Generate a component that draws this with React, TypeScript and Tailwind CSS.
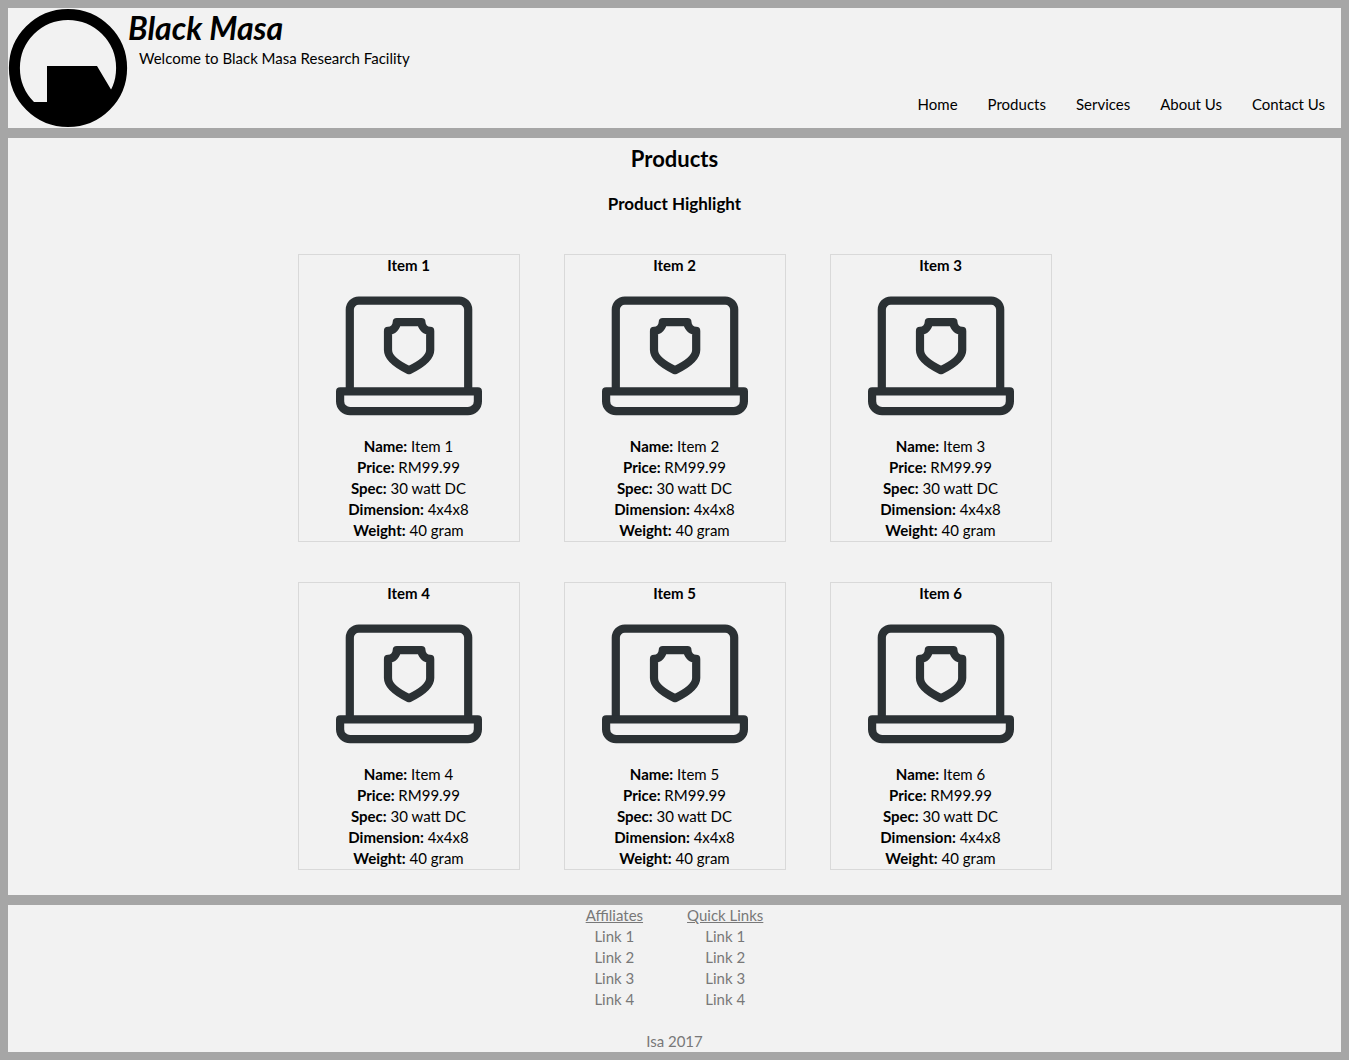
const navLinks = ["Home", "Products", "Services", "About Us", "Contact Us"];
const items = ["Item 1", "Item 2", "Item 3", "Item 4", "Item 5", "Item 6"];
const specs = [
  ["Price:", "RM99.99"],
  ["Spec:", "30 watt DC"],
  ["Dimension:", "4x4x8"],
  ["Weight:", "40 gram"],
];
const footerColumns = ["Affiliates", "Quick Links"];
const footerLinks = ["Link 1", "Link 2", "Link 3", "Link 4"];

function Logo() {
  return (
    <svg viewBox="0 0 120 120" className="size-[120px] shrink-0" role="img" aria-label="Black Masa logo">
      <circle cx="60" cy="60" r="53.6" fill="none" stroke="#000" strokeWidth="11" />
      <path d="M39 58H89L103 81.5L108 84A54 54 0 0 1 20 94H39Z" fill="#000" />
    </svg>
  );
}

function LaptopIcon() {
  return (
    <svg
      viewBox="0 0 146 120"
      className="h-[120px] w-[146px]"
      fill="none"
      stroke="#2b3134"
      strokeWidth="8.2"
      strokeLinejoin="round"
      aria-hidden="true"
    >
      <path d="M13.8 95V13.6A9 9 0 0 1 22.8 4.6H123.2A9 9 0 0 1 132.2 13.6V95" />
      <path d="M4.1 95.4H141.9V105.2A10 10 0 0 1 131.9 115.2H14.1A10 10 0 0 1 4.1 105.2Z" />
      <path d="M60.8 26.1H85.4A8.8 8.8 0 0 0 94.2 34.9V54C94.2 61 86 68 73 74.2C60 68 52 61 52 54V34.9A8.8 8.8 0 0 0 60.8 26.1Z" />
    </svg>
  );
}

function ProductCard({ name }: { name: string }) {
  return (
    <article className="flex w-[222px] flex-col items-center border border-[#d9d9d9]">
      <h4 className="font-bold">{name}</h4>
      <div className="pt-5 pb-5">
        <LaptopIcon />
      </div>
      <p>
        <b>Name:</b> {name}
      </p>
      {specs.map(([label, value]) => (
        <p key={label}>
          <b>{label}</b> {value}
        </p>
      ))}
    </article>
  );
}

export default function App() {
  return (
    <div className="flex min-h-screen flex-col gap-2.5 bg-[#a6a6a6] p-2 font-['Lato',sans-serif] text-[15px] leading-[21px] text-black">
      <header className="flex bg-[#f2f2f2]">
        <Logo />
        <div className="flex grow flex-col justify-between pb-[13px]">
          <div>
            <h1 className="text-[32px] leading-10 font-bold italic">Black Masa</h1>
            <p className="pl-[11px]">Welcome to Black Masa Research Facility</p>
          </div>
          <nav className="flex justify-end gap-[30px] pr-4">
            {navLinks.map((link) => (
              <a key={link} href="#">
                {link}
              </a>
            ))}
          </nav>
        </div>
      </header>

      <main className="flex flex-col items-center bg-[#f2f2f2] pt-1.5 pb-[25px]">
        <h2 className="text-[22px] leading-[30px] font-bold">Products</h2>
        <h3 className="mt-[18px] text-[17px] leading-6 font-bold">Product Highlight</h3>
        <section className="mt-[38px] grid grid-cols-3 gap-x-11 gap-y-10">
          {items.map((name) => (
            <ProductCard key={name} name={name} />
          ))}
        </section>
      </main>

      <footer className="flex flex-col items-center gap-[21px] bg-[#f2f2f2] text-[#787878]">
        <div className="flex gap-11 text-center">
          {footerColumns.map((title) => (
            <div key={title}>
              <h5 className="underline">{title}</h5>
              <ul>
                {footerLinks.map((link) => (
                  <li key={link}>
                    <a href="#">{link}</a>
                  </li>
                ))}
              </ul>
            </div>
          ))}
        </div>
        <p>Isa 2017</p>
      </footer>
    </div>
  );
}
